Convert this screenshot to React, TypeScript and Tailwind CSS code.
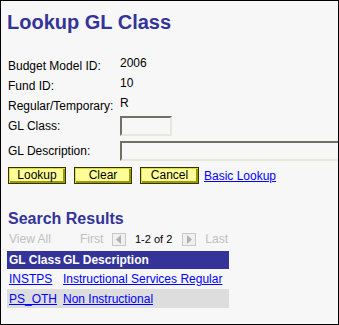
import React from "react";

const font = { fontFamily: '"Liberation Sans", Arial, sans-serif' };

function Btn({ label, w }: { label: string; w: string }) {
  return (
    <div
      className={`${w} h-[17px] flex items-center justify-center bg-[#ffff99] border border-[#333300] text-[12px] leading-[13px] text-black shadow-[inset_1px_1px_0_#dddd44,inset_-2px_-2px_0_#999900]`}
    >
      {label}
    </div>
  );
}

function Arrow({ dir }: { dir: "l" | "r" }) {
  return (
    <div className="w-[14px] h-[13px] border border-[#c8c8c8] bg-[#f0f0f0] flex items-center justify-center">
      <svg width="8" height="9" viewBox="0 0 8 9">
        {dir === "l" ? (
          <polygon points="6,0 6,9 1,4.5" fill="#b0b0b0" />
        ) : (
          <polygon points="2,0 2,9 7,4.5" fill="#b0b0b0" />
        )}
      </svg>
    </div>
  );
}

export default function App() {
  return (
    <div
      className="w-[339px] h-[325px] border border-black bg-[#f7f7f7] overflow-hidden relative"
      style={font}
    >
      <div className="pl-[6px] pt-[10px]">
        <div className="text-[20px] leading-[23px] font-bold text-[#333399]">Lookup GL Class</div>

        <div className="mt-[21px] pl-[1px] text-[12px] text-black">
          <div className="flex h-[20px]">
            <div className="w-[112px] shrink-0 pt-[4px] leading-[14px]">Budget Model ID:</div>
            <div className="pt-[1px] leading-[14px]">2006</div>
          </div>
          <div className="flex h-[20px]">
            <div className="w-[112px] shrink-0 pt-[4px] leading-[14px]">Fund ID:</div>
            <div className="pt-[1px] leading-[14px]">10</div>
          </div>
          <div className="flex h-[20px]">
            <div className="w-[112px] shrink-0 pt-[4px] leading-[14px]">Regular/Temporary:</div>
            <div className="pt-[1px] leading-[14px]">R</div>
          </div>
          <div className="flex h-[20px] mt-[1px] items-center">
            <div className="w-[112px] shrink-0 leading-[14px]">GL Class:</div>
            <div className="w-[52px] shrink-0 h-[20px] border-2 border-t-[#707068] border-l-[#707068] border-b-[#e8e8d8] border-r-[#e8e8d8] bg-[#f7f7f7]" />
          </div>
          <div className="flex h-[20px] mt-[5px] items-center">
            <div className="w-[112px] shrink-0 leading-[14px]">GL Description:</div>
            <div className="w-[240px] shrink-0 h-[20px] border-2 border-t-[#707068] border-l-[#707068] border-b-[#e8e8d8] border-r-[#e8e8d8] bg-[#f7f7f7]" />
          </div>

          <div className="flex items-center mt-[6px]">
            <Btn label="Lookup" w="w-[58px]" />
            <div className="ml-[8px]">
              <Btn label="Clear" w="w-[58px]" />
            </div>
            <div className="ml-[8px]">
              <Btn label="Cancel" w="w-[59px]" />
            </div>
            <a className="ml-[5px] text-[#0000ff] underline leading-[14px]">Basic Lookup</a>
          </div>
        </div>

        <div className="mt-[26px] text-[16px] leading-[18px] font-bold text-[#333399] pl-[1px]">
          Search Results
        </div>

        <div className="flex items-center h-[16px] mt-[3px] pl-[2px] text-[12px] text-[#c0c0c0]">
          <span className="w-[71px]">View All</span>
          <span className="w-[32px]">First</span>
          <Arrow dir="l" />
          <span className="ml-[9px] mr-[10px] text-black text-[11px]">1-2 of 2</span>
          <Arrow dir="r" />
          <span className="ml-[9px]">Last</span>
        </div>

        <div className="mt-[4px] w-[222px] text-[12px]">
          <div className="flex h-[18px] items-center bg-[#333399] text-white font-bold">
            <div className="w-[56px] pl-[2px]">GL Class</div>
            <div>GL Description</div>
          </div>
          <div className="flex h-[20px] items-center">
            <div className="w-[56px] pl-[2px]">
              <a className="text-[#0000ff] underline">INSTPS</a>
            </div>
            <a className="text-[#0000ff] underline">Instructional Services Regular</a>
          </div>
          <div className="flex h-[19px] items-center bg-[#dddddd]">
            <div className="w-[56px] pl-[2px]">
              <a className="text-[#0000ff] underline">PS_OTH</a>
            </div>
            <a className="text-[#0000ff] underline">Non Instructional</a>
          </div>
        </div>
      </div>
    </div>
  );
}
